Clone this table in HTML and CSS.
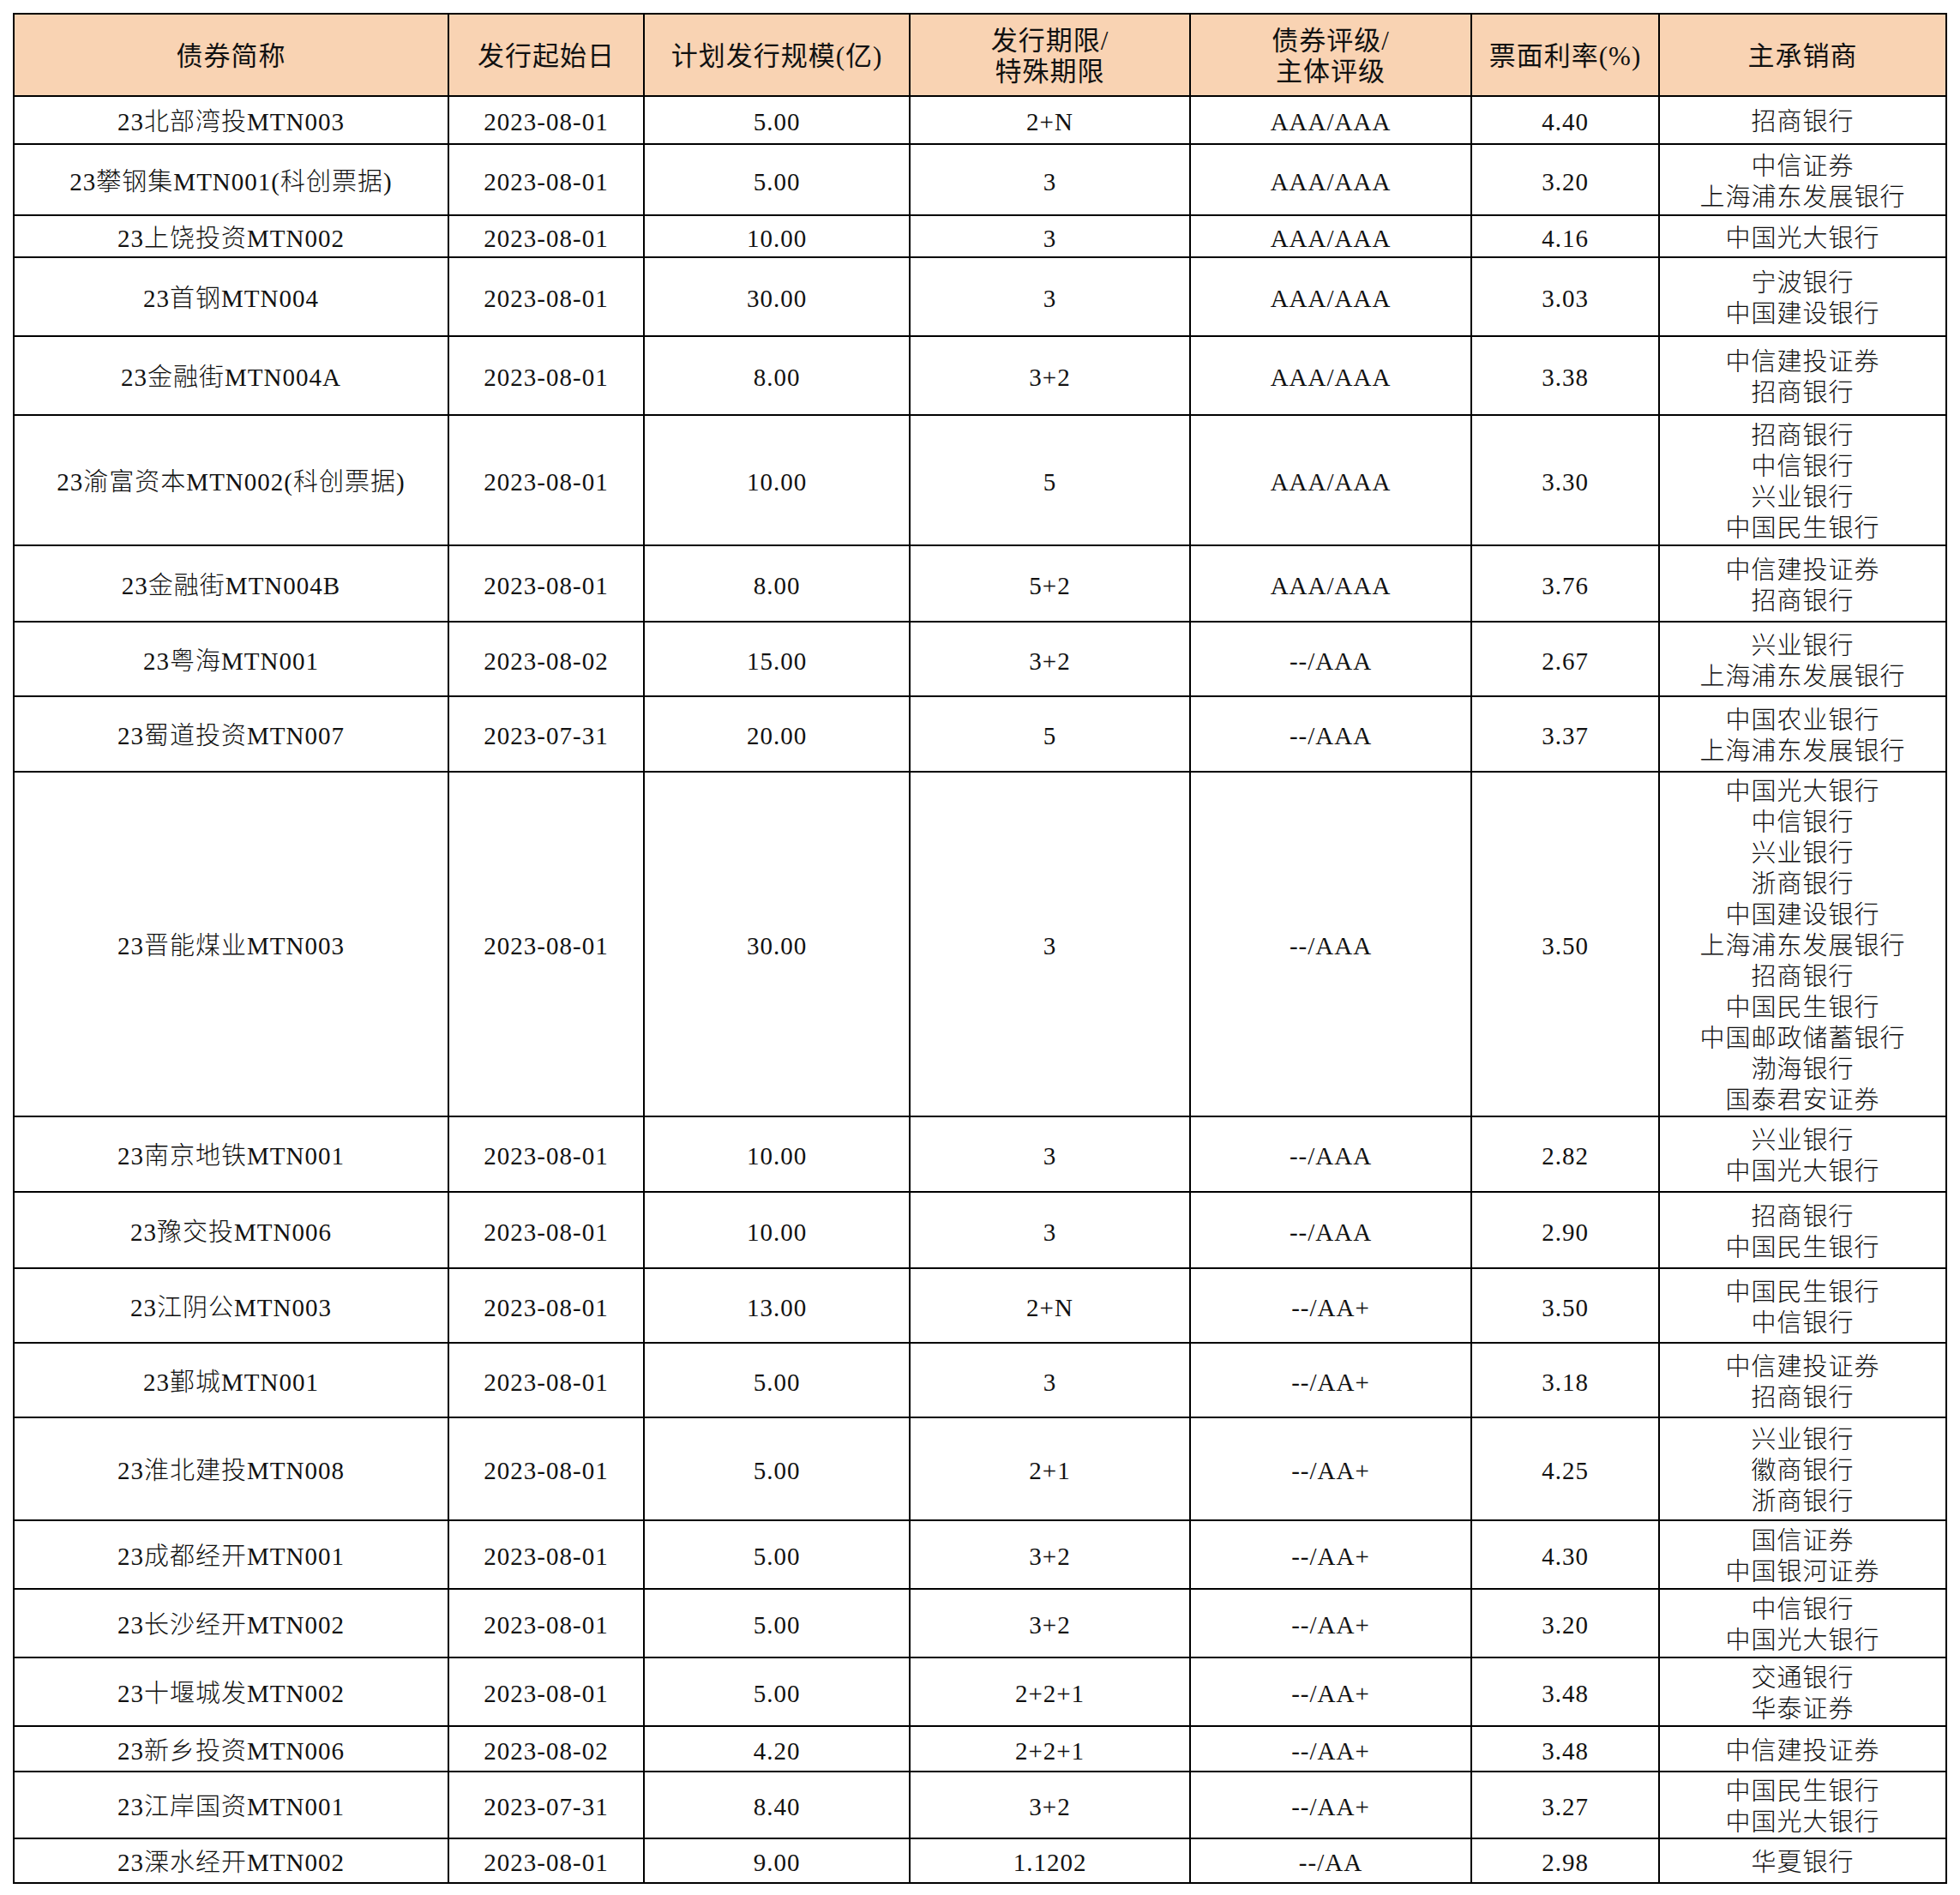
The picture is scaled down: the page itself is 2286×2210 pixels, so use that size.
FILE: index.html
```html
<!DOCTYPE html>
<html lang="zh-CN">
<head>
<meta charset="utf-8">
<title>债券发行</title>
<link rel="stylesheet" href="styles.css">
</head>
<body>
<div class="page">
<table class="bonds">
<colgroup>
<col class="c1"><col class="c2"><col class="c3"><col class="c4"><col class="c5"><col class="c6"><col class="c7">
</colgroup>
<thead>
<tr class="head">
<th>债券简称</th><th>发行起始日</th><th>计划发行规模(亿)</th><th>发行期限/<br>特殊期限</th><th>债券评级/<br>主体评级</th><th>票面利率(%)</th><th>主承销商</th>
</tr>
</thead>
<tbody>
<tr class="h56"><td>23北部湾投MTN003</td><td>2023-08-01</td><td>5.00</td><td>2+N</td><td>AAA/AAA</td><td>4.40</td><td>招商银行</td></tr>
<tr class="h83"><td>23攀钢集MTN001(科创票据)</td><td>2023-08-01</td><td>5.00</td><td>3</td><td>AAA/AAA</td><td>3.20</td><td>中信证券<br>上海浦东发展银行</td></tr>
<tr class="h49"><td>23上饶投资MTN002</td><td>2023-08-01</td><td>10.00</td><td>3</td><td>AAA/AAA</td><td>4.16</td><td>中国光大银行</td></tr>
<tr class="h92"><td>23首钢MTN004</td><td>2023-08-01</td><td>30.00</td><td>3</td><td>AAA/AAA</td><td>3.03</td><td>宁波银行<br>中国建设银行</td></tr>
<tr class="h92"><td>23金融街MTN004A</td><td>2023-08-01</td><td>8.00</td><td>3+2</td><td>AAA/AAA</td><td>3.38</td><td>中信建投证券<br>招商银行</td></tr>
<tr class="h152"><td>23渝富资本MTN002(科创票据)</td><td>2023-08-01</td><td>10.00</td><td>5</td><td>AAA/AAA</td><td>3.30</td><td>招商银行<br>中信银行<br>兴业银行<br>中国民生银行</td></tr>
<tr class="h89"><td>23金融街MTN004B</td><td>2023-08-01</td><td>8.00</td><td>5+2</td><td>AAA/AAA</td><td>3.76</td><td>中信建投证券<br>招商银行</td></tr>
<tr class="h87"><td>23粤海MTN001</td><td>2023-08-02</td><td>15.00</td><td>3+2</td><td>--/AAA</td><td>2.67</td><td>兴业银行<br>上海浦东发展银行</td></tr>
<tr class="h88"><td>23蜀道投资MTN007</td><td>2023-07-31</td><td>20.00</td><td>5</td><td>--/AAA</td><td>3.37</td><td>中国农业银行<br>上海浦东发展银行</td></tr>
<tr class="h402"><td>23晋能煤业MTN003</td><td>2023-08-01</td><td>30.00</td><td>3</td><td>--/AAA</td><td>3.50</td><td>中国光大银行<br>中信银行<br>兴业银行<br>浙商银行<br>中国建设银行<br>上海浦东发展银行<br>招商银行<br>中国民生银行<br>中国邮政储蓄银行<br>渤海银行<br>国泰君安证券</td></tr>
<tr class="h88"><td>23南京地铁MTN001</td><td>2023-08-01</td><td>10.00</td><td>3</td><td>--/AAA</td><td>2.82</td><td>兴业银行<br>中国光大银行</td></tr>
<tr class="h89"><td>23豫交投MTN006</td><td>2023-08-01</td><td>10.00</td><td>3</td><td>--/AAA</td><td>2.90</td><td>招商银行<br>中国民生银行</td></tr>
<tr class="h87"><td>23江阴公MTN003</td><td>2023-08-01</td><td>13.00</td><td>2+N</td><td>--/AA+</td><td>3.50</td><td>中国民生银行<br>中信银行</td></tr>
<tr class="h87"><td>23鄞城MTN001</td><td>2023-08-01</td><td>5.00</td><td>3</td><td>--/AA+</td><td>3.18</td><td>中信建投证券<br>招商银行</td></tr>
<tr class="h120"><td>23淮北建投MTN008</td><td>2023-08-01</td><td>5.00</td><td>2+1</td><td>--/AA+</td><td>4.25</td><td>兴业银行<br>徽商银行<br>浙商银行</td></tr>
<tr class="h80"><td>23成都经开MTN001</td><td>2023-08-01</td><td>5.00</td><td>3+2</td><td>--/AA+</td><td>4.30</td><td>国信证券<br>中国银河证券</td></tr>
<tr class="h80"><td>23长沙经开MTN002</td><td>2023-08-01</td><td>5.00</td><td>3+2</td><td>--/AA+</td><td>3.20</td><td>中信银行<br>中国光大银行</td></tr>
<tr class="h80"><td>23十堰城发MTN002</td><td>2023-08-01</td><td>5.00</td><td>2+2+1</td><td>--/AA+</td><td>3.48</td><td>交通银行<br>华泰证券</td></tr>
<tr class="h53"><td>23新乡投资MTN006</td><td>2023-08-02</td><td>4.20</td><td>2+2+1</td><td>--/AA+</td><td>3.48</td><td>中信建投证券</td></tr>
<tr class="h76"><td>23江岸国资MTN001</td><td>2023-07-31</td><td>8.40</td><td>3+2</td><td>--/AA+</td><td>3.27</td><td>中国民生银行<br>中国光大银行</td></tr>
<tr class="h52"><td>23溧水经开MTN002</td><td>2023-08-01</td><td>9.00</td><td>1.1202</td><td>--/AA</td><td>2.98</td><td>华夏银行</td></tr>
</tbody>
</table>
</div>
</body>
</html>
```

FILE: styles.css
```css
html, body {
  margin: 0;
  padding: 0;
  background: #ffffff;
}

.page {
  padding: 15px 0 0 15px;
}

.bonds {
  border-collapse: collapse;
  table-layout: fixed;
  width: 2256px;
  font-family: "Liberation Serif", "Noto Sans CJK SC", serif;
  font-size: 29px;
  font-weight: 300;
  letter-spacing: 1px;
  color: #111111;
  line-height: 36px;
}

.c1 { width: 507px; }
.c2 { width: 228px; }
.c3 { width: 310px; }
.c4 { width: 327px; }
.c5 { width: 328px; }
.c6 { width: 219px; }
.c7 { width: 335px; }

.bonds th,
.bonds td {
  border: 2px solid #000000;
  padding: 4px 0 0 0;
  text-align: center;
  vertical-align: middle;
  white-space: nowrap;
}

.bonds th {
  background: #f9d3b3;
  font-size: 31px;
  font-weight: 400;
}

.head { height: 96px; }
.h49 { height: 49px; }
.h52 { height: 52px; }
.h53 { height: 53px; }
.h56 { height: 56px; }
.h76 { height: 76px; }
.h80 { height: 80px; }
.h83 { height: 83px; }
.h87 { height: 87px; }
.h88 { height: 88px; }
.h89 { height: 89px; }
.h92 { height: 92px; }
.h120 { height: 120px; }
.h152 { height: 152px; }
.h402 { height: 402px; }
```
